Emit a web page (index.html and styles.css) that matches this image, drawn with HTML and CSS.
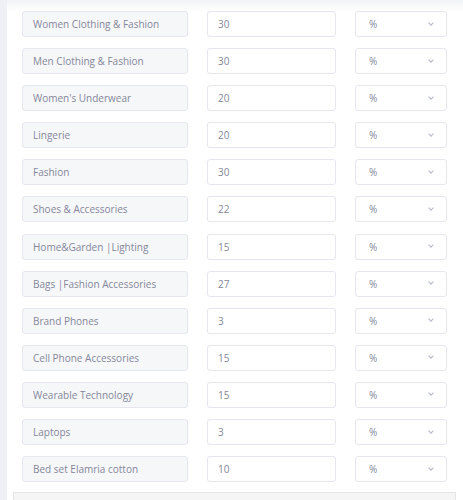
FILE: index.html
```html
<!DOCTYPE html>
<html lang="en">
<head>
  <meta charset="UTF-8">
  <meta name="viewport" content="width=device-width, initial-scale=1.0">
  <title>Category Commission</title>
  <link rel="stylesheet" href="styles.css">
</head>
<body>
  <div class="panel">
    <div class="rates">
      <div class="rate-row">
        <div class="cat-name">Women Clothing &amp; Fashion</div>
        <div class="rate-input">30</div>
        <div class="rate-type">% <span class="chev"></span></div>
      </div>
      <div class="rate-row">
        <div class="cat-name">Men Clothing &amp; Fashion</div>
        <div class="rate-input">30</div>
        <div class="rate-type">% <span class="chev"></span></div>
      </div>
      <div class="rate-row">
        <div class="cat-name">Women's Underwear</div>
        <div class="rate-input">20</div>
        <div class="rate-type">% <span class="chev"></span></div>
      </div>
      <div class="rate-row">
        <div class="cat-name">Lingerie</div>
        <div class="rate-input">20</div>
        <div class="rate-type">% <span class="chev"></span></div>
      </div>
      <div class="rate-row">
        <div class="cat-name">Fashion</div>
        <div class="rate-input">30</div>
        <div class="rate-type">% <span class="chev"></span></div>
      </div>
      <div class="rate-row">
        <div class="cat-name">Shoes &amp; Accessories</div>
        <div class="rate-input">22</div>
        <div class="rate-type">% <span class="chev"></span></div>
      </div>
      <div class="rate-row">
        <div class="cat-name">Home&amp;Garden |Lighting</div>
        <div class="rate-input">15</div>
        <div class="rate-type">% <span class="chev"></span></div>
      </div>
      <div class="rate-row">
        <div class="cat-name">Bags |Fashion Accessories</div>
        <div class="rate-input">27</div>
        <div class="rate-type">% <span class="chev"></span></div>
      </div>
      <div class="rate-row">
        <div class="cat-name">Brand Phones</div>
        <div class="rate-input">3</div>
        <div class="rate-type">% <span class="chev"></span></div>
      </div>
      <div class="rate-row">
        <div class="cat-name">Cell Phone Accessories</div>
        <div class="rate-input">15</div>
        <div class="rate-type">% <span class="chev"></span></div>
      </div>
      <div class="rate-row">
        <div class="cat-name">Wearable Technology</div>
        <div class="rate-input">15</div>
        <div class="rate-type">% <span class="chev"></span></div>
      </div>
      <div class="rate-row">
        <div class="cat-name">Laptops</div>
        <div class="rate-input">3</div>
        <div class="rate-type">% <span class="chev"></span></div>
      </div>
      <div class="rate-row">
        <div class="cat-name">Bed set Elamria cotton</div>
        <div class="rate-input">10</div>
        <div class="rate-type">% <span class="chev"></span></div>
      </div>
    </div>
    <div class="panel-footer"></div>
  </div>
</body>
</html>
```

FILE: styles.css
```css
/* Page */
body {
  margin: 0;
  background-color: #eef0f6;
  font-family: 'Open Sans', 'Liberation Sans', sans-serif;
  font-size: 10px;
  color: #858799;
}

/* Card */
.panel {
  margin-left: 7px;
  min-height: 500px;
  background: linear-gradient(#f3f4f8, #ffffff 12px);
}

.rates {
  padding: 11px 0 0 15px;
  display: flex;
  flex-direction: column;
  gap: 11.1px;
}

.rate-row {
  display: grid;
  grid-template-columns: 166px 129px 92px;
  column-gap: 19px;
}

.cat-name,
.rate-input,
.rate-type {
  box-sizing: border-box;
  height: 26px;
  border: 1px solid #e5e6ee;
  border-radius: 3px;
  display: flex;
  align-items: center;
}

.cat-name {
  background-color: #f6f7f9;
  padding-left: 10px;
}

.rate-input {
  background-color: #fff;
  padding-left: 10px;
}

.rate-type {
  background-color: #fff;
  padding: 0 13px 0 13px;
  justify-content: space-between;
}

/* Select arrow */
.chev {
  width: 3px;
  height: 3px;
  border-right: 1px solid #b5b7c6;
  border-bottom: 1px solid #b5b7c6;
  transform: rotate(45deg);
  margin-top: -3px;
}

.panel-footer {
  margin: 10px 0 0 6px;
  width: 443px;
  height: 30px;
  background-color: #f5f5f5;
  border: 1px solid #e5e5e5;
  box-sizing: border-box;
}
```
